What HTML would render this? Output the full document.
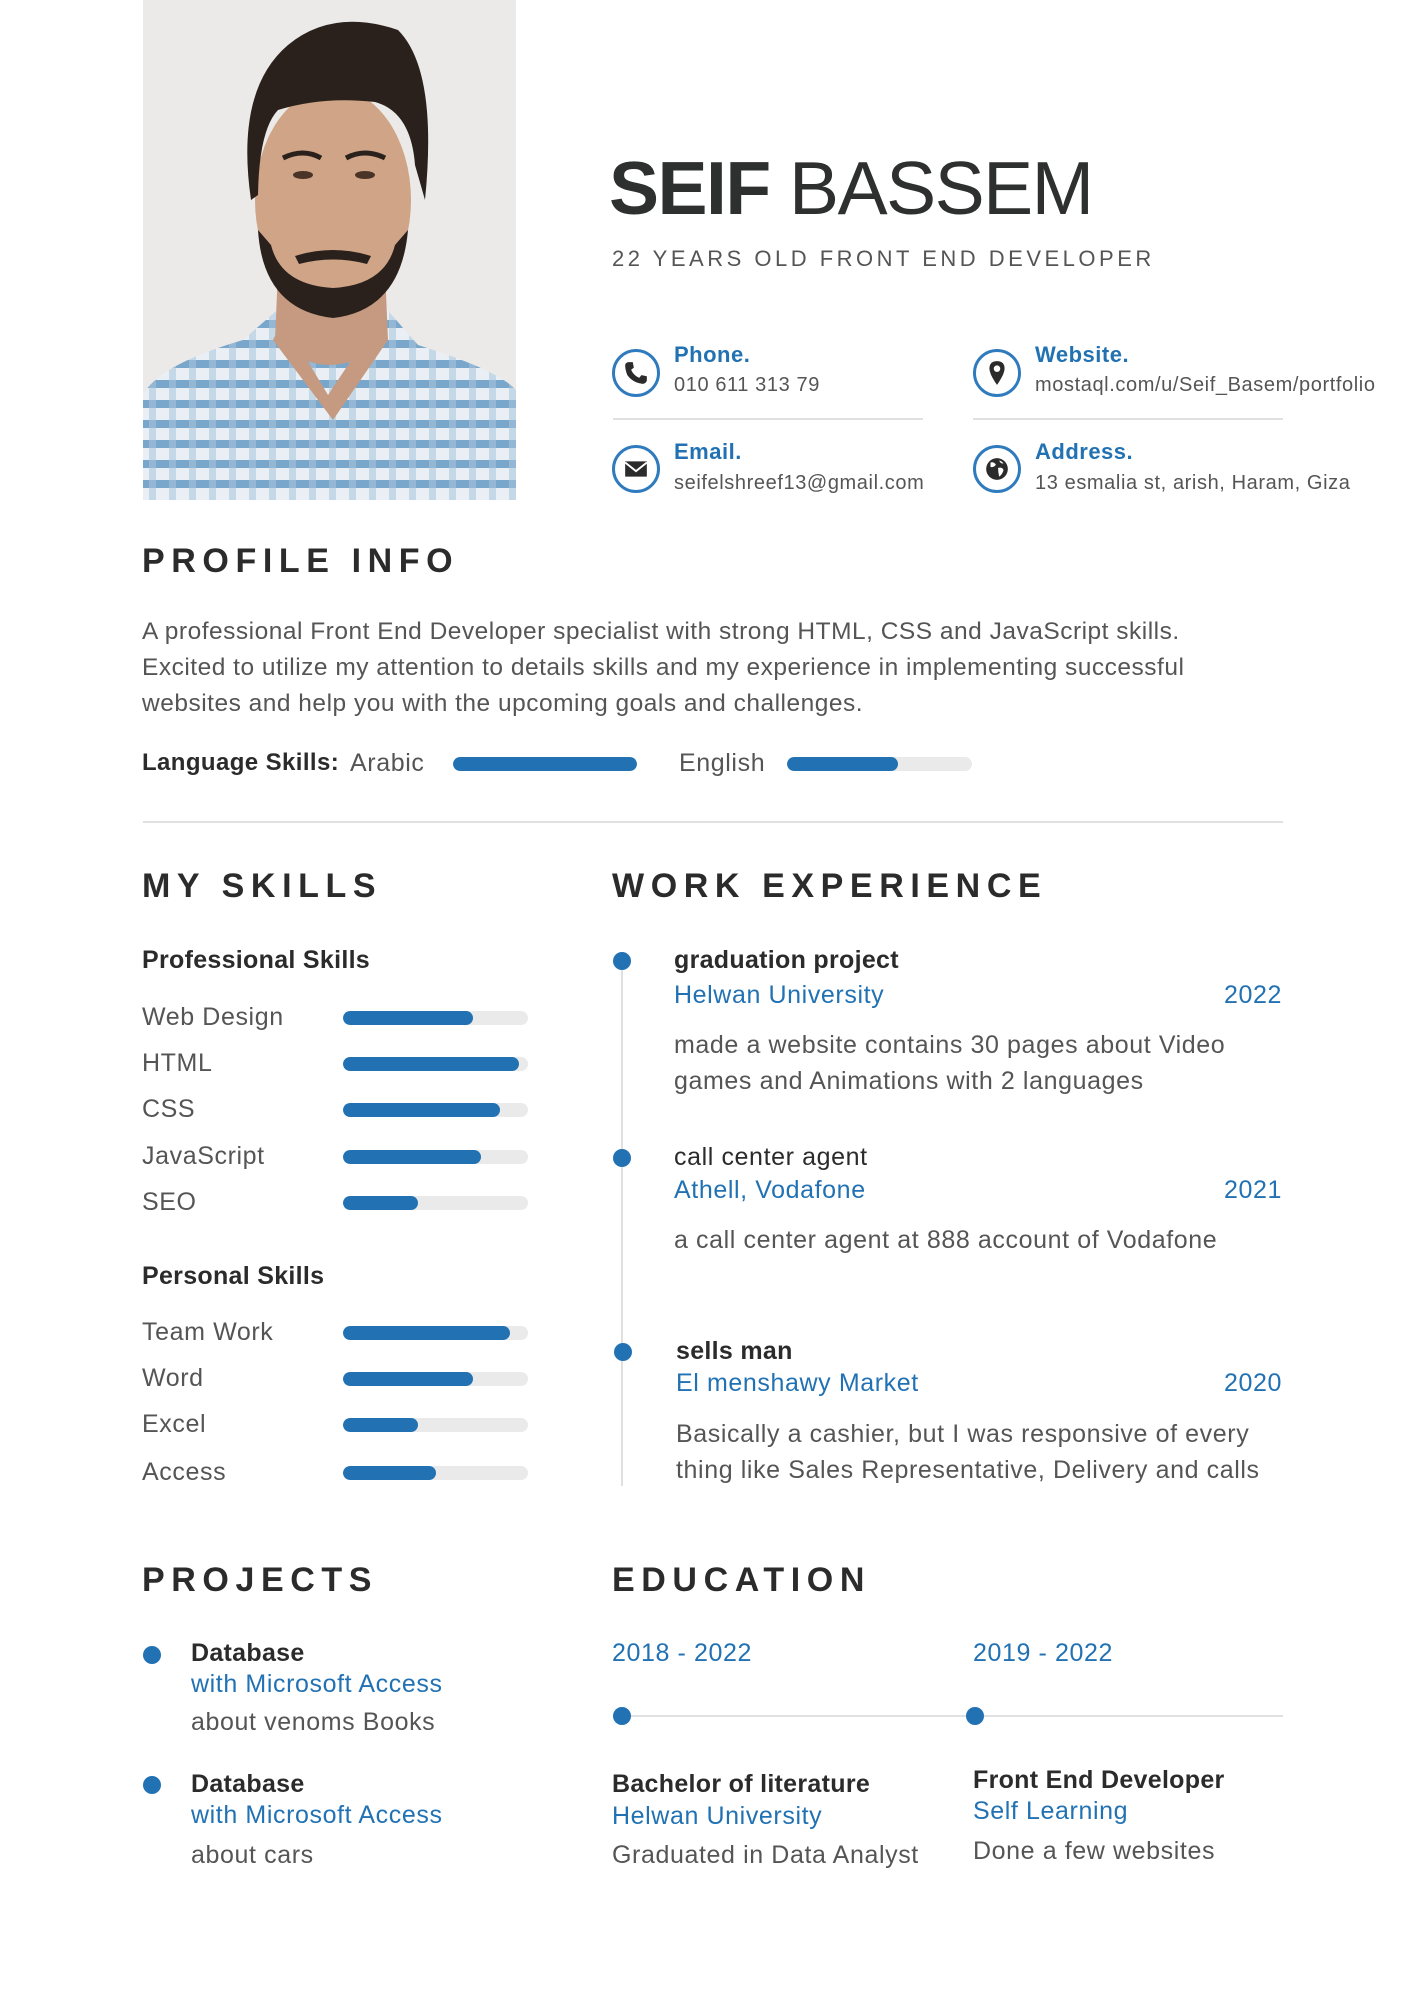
<!DOCTYPE html>
<html><head><meta charset="utf-8"><style>
*{margin:0;padding:0;box-sizing:border-box}
body{width:1414px;height:2000px;background:#fff;position:relative;overflow:hidden;font-family:"Liberation Sans",sans-serif;color:#555}
.a{position:absolute;white-space:nowrap}
.t{font-size:25px;line-height:30px;color:#555;letter-spacing:.6px}
.b{font-weight:bold;color:#2b2b2b;letter-spacing:.3px}
.bl{color:#2272b3}
.h{font-size:34px;font-weight:bold;letter-spacing:6.6px;color:#2b2b2b;line-height:40px}
.bar{position:absolute;height:14px;border-radius:7px;background:#ebeaea;overflow:hidden}
.bar i{position:absolute;left:0;top:0;bottom:0;border-radius:7px;background:#2272b3}
.dot{position:absolute;width:18px;height:18px;border-radius:50%;background:#2272b3}
.ic{position:absolute;width:48px;height:48px;border-radius:50%;border:3px solid #2f7bbd}
.ic svg{position:absolute;left:8px;top:8px;width:26px;height:26px}
.lb{font-size:22px;line-height:28px;color:#2272b3;font-weight:bold;letter-spacing:.5px}
.vl{font-size:20px;line-height:26px;color:#555;letter-spacing:.6px}
</style></head><body>

<svg class="a" style="left:143px;top:0" width="373" height="500" viewBox="0 0 373 500">
<defs><pattern id="st" width="20" height="20" patternUnits="userSpaceOnUse">
<rect width="20" height="20" fill="#e9eff4"/><rect width="20" height="8" fill="#79a7cb"/><rect x="6" width="7" height="20" fill="#a8c5dc" opacity=".55"/></pattern></defs>
<rect width="373" height="500" fill="#ebeae8"/>
<path d="M0 395 Q15 365 100 340 L140 305 L240 305 L275 345 Q355 370 373 390 L373 500 L0 500Z" fill="url(#st)"/>
<path d="M135 270 L132 340 Q185 390 245 340 L242 270Z" fill="#c59a80"/>
<path d="M140 320 L185 395 L235 320 L245 340 L190 420 L130 340Z" fill="#c59a80"/>
<ellipse cx="190" cy="200" rx="78" ry="112" fill="#cfa487"/>
<path d="M115 230 Q120 310 190 318 Q258 310 265 230 L252 245 Q242 285 190 288 Q138 285 128 245Z" fill="#2a211c"/>
<path d="M152 256 Q190 244 228 256 L224 264 Q190 255 156 264Z" fill="#2a211c"/>
<path d="M108 200 Q92 90 145 45 Q190 8 255 30 Q295 70 282 200 L272 165 Q268 112 232 102 Q180 96 135 110 Q116 130 115 195Z" fill="#2a211c"/>
<ellipse cx="160" cy="175" rx="10" ry="4" fill="#4a3427"/><ellipse cx="222" cy="175" rx="10" ry="4" fill="#4a3427"/>
<path d="M140 158 Q160 148 178 158 M203 158 Q222 148 242 158" stroke="#2a211c" stroke-width="5" fill="none"/>
</svg>

<div class="a" style="left:609px;top:148px;font-size:75px;line-height:80px;color:#2e2f2f;letter-spacing:-1.5px"><b>SEIF</b> BASSEM</div>
<div class="a" style="left:612px;top:245px;font-size:22px;line-height:28px;letter-spacing:3.5px;color:#555">22 YEARS OLD FRONT END DEVELOPER</div>

<div class="ic" style="left:612px;top:349px"><svg viewBox="0 0 24 24"><path d="M5 2 L9 2 L10 7 L7.5 9 Q9.5 14 15 16.5 L17 14 L22 15 L22 19 Q21 22 18 22 Q9 21 4 14 Q2 9 2 5 Q2 2.5 5 2Z" fill="#2b2b2b"/></svg></div>
<div class="a lb" style="left:674px;top:341px">Phone.</div>
<div class="a vl" style="left:674px;top:372px">010 611 313 79</div>
<div class="a" style="left:613px;top:418px;width:310px;height:2px;background:#e0e0e0"></div>

<div class="ic" style="left:612px;top:445px"><svg viewBox="0 0 24 24"><path d="M2 5 H22 V19 H2Z" fill="#2b2b2b"/><path d="M2 6 L12 14 L22 6" stroke="#fff" stroke-width="1.8" fill="none"/></svg></div>
<div class="a lb" style="left:674px;top:438px">Email.</div>
<div class="a vl" style="left:674px;top:470px">seifelshreef13@gmail.com</div>

<div class="ic" style="left:973px;top:349px"><svg viewBox="0 0 24 24"><path d="M12 1 Q19 1 19 8 Q19 13 12 23 Q5 13 5 8 Q5 1 12 1Z" fill="#2b2b2b"/><circle cx="12" cy="8" r="3" fill="#fff"/></svg></div>
<div class="a lb" style="left:1035px;top:341px">Website.</div>
<div class="a vl" style="left:1035px;top:372px">mostaql.com/u/Seif_Basem/portfolio</div>
<div class="a" style="left:973px;top:418px;width:310px;height:2px;background:#e0e0e0"></div>

<div class="ic" style="left:973px;top:445px"><svg viewBox="0 0 24 24"><circle cx="12" cy="12" r="10" fill="#2b2b2b"/><path d="M6 6 Q9 5 11 8 Q9 11 6 10Z M13 11 Q17 10 18 13 Q17 17 14 19 Q13 15 13 11Z M14 4 Q17 5 18 7 Q15 7 14 4Z" fill="#fff"/></svg></div>
<div class="a lb" style="left:1035px;top:438px">Address.</div>
<div class="a vl" style="left:1035px;top:470px">13 esmalia st, arish, Haram, Giza</div>

<div class="a h" style="left:142px;top:541px">PROFILE INFO</div>
<div class="a t" style="left:142px;top:614px;line-height:36px;font-size:24.5px;letter-spacing:.5px">A professional Front End Developer specialist with strong HTML, CSS and JavaScript skills.<br>Excited to utilize my attention to details skills and my experience in implementing successful<br>websites and help you with the upcoming goals and challenges.</div>

<div class="a t b" style="left:142px;top:748px;font-size:24px;letter-spacing:.4px">Language Skills:</div>
<div class="a t" style="left:350px;top:748px">Arabic</div>
<div class="bar" style="left:453px;top:757px;width:184px"><i style="width:184px"></i></div>
<div class="a t" style="left:679px;top:748px">English</div>
<div class="bar" style="left:787px;top:757px;width:185px"><i style="width:111px"></i></div>
<div class="a" style="left:143px;top:821px;width:1140px;height:2px;background:#e0e0e0"></div>

<div class="a h" style="left:142px;top:866px">MY SKILLS</div>
<div class="a h" style="left:612px;top:866px">WORK EXPERIENCE</div>

<div class="a t b" style="left:142px;top:945px">Professional Skills</div>
<div class="a t" style="left:142px;top:1002px">Web Design</div><div class="bar" style="left:343px;top:1011px;width:185px"><i style="width:130px"></i></div>
<div class="a t" style="left:142px;top:1048px">HTML</div><div class="bar" style="left:343px;top:1057px;width:185px"><i style="width:176px"></i></div>
<div class="a t" style="left:142px;top:1094px">CSS</div><div class="bar" style="left:343px;top:1103px;width:185px"><i style="width:157px"></i></div>
<div class="a t" style="left:142px;top:1141px">JavaScript</div><div class="bar" style="left:343px;top:1150px;width:185px"><i style="width:138px"></i></div>
<div class="a t" style="left:142px;top:1187px">SEO</div><div class="bar" style="left:343px;top:1196px;width:185px"><i style="width:75px"></i></div>

<div class="a t b" style="left:142px;top:1261px">Personal Skills</div>
<div class="a t" style="left:142px;top:1317px">Team Work</div><div class="bar" style="left:343px;top:1326px;width:185px"><i style="width:167px"></i></div>
<div class="a t" style="left:142px;top:1363px">Word</div><div class="bar" style="left:343px;top:1372px;width:185px"><i style="width:130px"></i></div>
<div class="a t" style="left:142px;top:1409px">Excel</div><div class="bar" style="left:343px;top:1418px;width:185px"><i style="width:75px"></i></div>
<div class="a t" style="left:142px;top:1457px">Access</div><div class="bar" style="left:343px;top:1466px;width:185px"><i style="width:93px"></i></div>

<div class="a" style="left:621px;top:960px;width:2px;height:526px;background:#e0e0e0"></div>
<div class="dot" style="left:613px;top:952px"></div>
<div class="dot" style="left:613px;top:1149px"></div>
<div class="dot" style="left:614px;top:1343px"></div>

<div class="a t b" style="left:674px;top:945px">graduation project</div>
<div class="a t bl" style="left:674px;top:980px">Helwan University</div>
<div class="a t bl" style="left:1180px;top:980px;width:102px;text-align:right">2022</div>
<div class="a t" style="left:674px;top:1027px;line-height:36px">made a website contains 30 pages about Video<br>games and Animations with 2 languages</div>

<div class="a t" style="left:674px;top:1142px;color:#2b2b2b">call center agent</div>
<div class="a t bl" style="left:674px;top:1175px">Athell, Vodafone</div>
<div class="a t bl" style="left:1180px;top:1175px;width:102px;text-align:right">2021</div>
<div class="a t" style="left:674px;top:1225px">a call center agent at 888 account of Vodafone</div>

<div class="a t b" style="left:676px;top:1336px">sells man</div>
<div class="a t bl" style="left:676px;top:1368px">El menshawy Market</div>
<div class="a t bl" style="left:1180px;top:1368px;width:102px;text-align:right">2020</div>
<div class="a t" style="left:676px;top:1416px;line-height:36px">Basically a cashier, but I was responsive of every<br>thing like Sales Representative, Delivery and calls</div>

<div class="a h" style="left:142px;top:1560px">PROJECTS</div>
<div class="a h" style="left:612px;top:1560px">EDUCATION</div>

<div class="dot" style="left:143px;top:1646px"></div>
<div class="a t b" style="left:191px;top:1638px">Database</div>
<div class="a t bl" style="left:191px;top:1669px">with Microsoft Access</div>
<div class="a t" style="left:191px;top:1707px">about venoms Books</div>
<div class="dot" style="left:143px;top:1776px"></div>
<div class="a t b" style="left:191px;top:1769px">Database</div>
<div class="a t bl" style="left:191px;top:1800px">with Microsoft Access</div>
<div class="a t" style="left:191px;top:1840px">about cars</div>

<div class="a t bl" style="left:612px;top:1638px">2018 - 2022</div>
<div class="a t bl" style="left:973px;top:1638px">2019 - 2022</div>
<div class="a" style="left:622px;top:1715px;width:661px;height:2px;background:#e0e0e0"></div>
<div class="dot" style="left:613px;top:1707px"></div>
<div class="dot" style="left:966px;top:1707px"></div>

<div class="a t b" style="left:612px;top:1769px">Bachelor of literature</div>
<div class="a t bl" style="left:612px;top:1801px">Helwan University</div>
<div class="a t" style="left:612px;top:1840px">Graduated in Data Analyst</div>
<div class="a t b" style="left:973px;top:1765px">Front End Developer</div>
<div class="a t bl" style="left:973px;top:1796px">Self Learning</div>
<div class="a t" style="left:973px;top:1836px">Done a few websites</div>
</body></html>
